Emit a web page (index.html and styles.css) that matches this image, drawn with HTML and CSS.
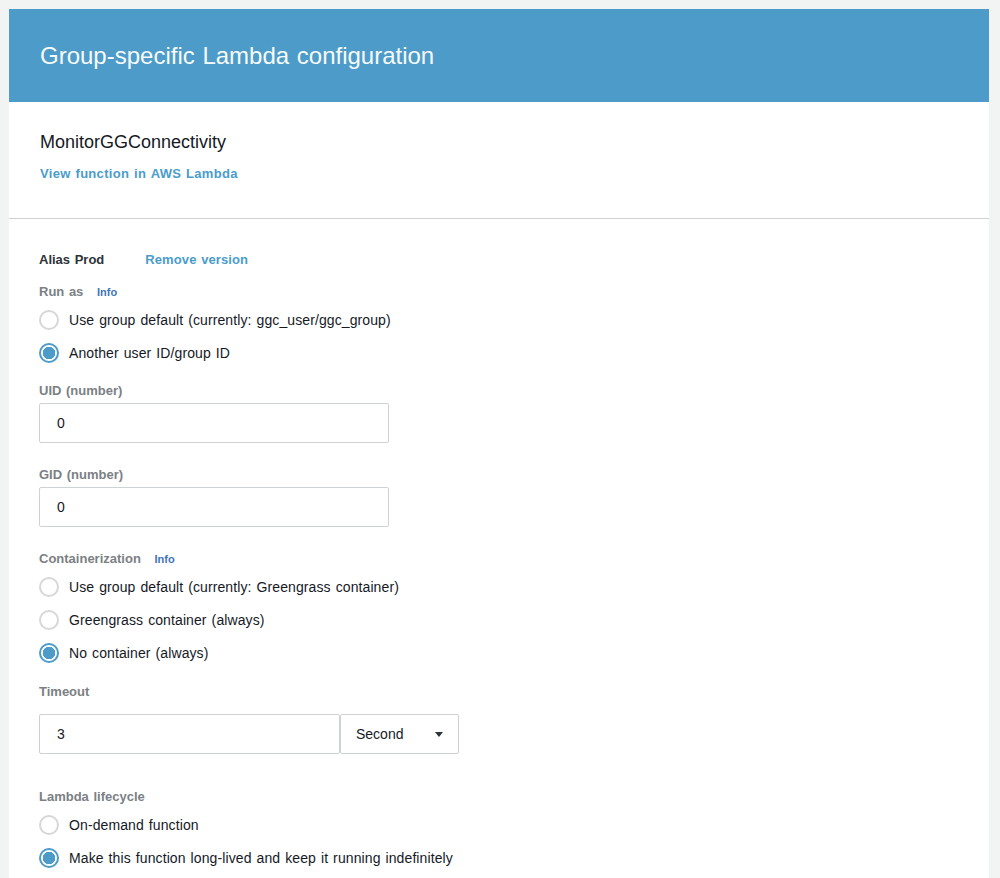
FILE: index.html
```html
<!DOCTYPE html>
<html>
<head>
<meta charset="utf-8">
<link rel="stylesheet" href="styles.css">
</head>
<body>
<div class="card">
  <div class="card-header">Group-specific Lambda configuration</div>
  <div class="section-top">
    <div class="fn-name">MonitorGGConnectivity</div>
    <a class="fn-link" href="#">View function in AWS Lambda</a>
  </div>
  <div class="section-main">
    <div class="alias-row">
      <span class="alias">Alias Prod</span>
      <a class="remove" href="#">Remove version</a>
    </div>

    <div class="label first-label">Run as <span class="info">Info</span></div>
    <div class="radios">
      <label class="radio"><span class="dot"></span>Use group default (currently: ggc_user/ggc_group)</label>
      <label class="radio"><span class="dot on"></span>Another user ID/group ID</label>
    </div>

    <div class="label field-label">UID (number)</div>
    <div class="input">0</div>

    <div class="label field-label gap">GID (number)</div>
    <div class="input">0</div>

    <div class="label gap">Containerization <span class="info">Info</span></div>
    <div class="radios">
      <label class="radio"><span class="dot"></span>Use group default (currently: Greengrass container)</label>
      <label class="radio"><span class="dot"></span>Greengrass container (always)</label>
      <label class="radio"><span class="dot on"></span>No container (always)</label>
    </div>

    <div class="label timeout-label">Timeout</div>
    <div class="timeout-row">
      <div class="input timeout-input">3</div>
      <div class="select">Second<span class="caret"></span></div>
    </div>

    <div class="label lifecycle-label">Lambda lifecycle</div>
    <div class="radios">
      <label class="radio"><span class="dot"></span>On-demand function</label>
      <label class="radio"><span class="dot on"></span>Make this function long-lived and keep it running indefinitely</label>
    </div>
  </div>
</div>
</body>
</html>
```

FILE: styles.css
```css
html, body {
  margin: 0;
  padding: 0;
  background: #f2f3f3;
  font-family: "Liberation Sans", Arial, sans-serif;
  color: #16191f;
}
body {
  padding: 9px 11px 0 9px;
  height: 869px;
  overflow: hidden;
}
.card {
  background: #fff;
  height: 900px;
}
.card-header {
  background: #4d9bc8;
  color: #f7fafc;
  height: 93px;
  box-sizing: border-box;
  padding: 0 31px;
  font-size: 24px;
  line-height: 93px;
  word-spacing: 1px;
}
.section-top {
  padding: 28px 31px 34px;
  border-bottom: 1px solid #cfd2d4;
}
.fn-name {
  font-size: 18px;
  line-height: 24px;
  color: #16191f;
}
.fn-link {
  display: block;
  margin-top: 10px;
  font-size: 13px;
  line-height: 20px;
  font-weight: bold;
  color: #4a9ccb;
  text-decoration: none;
  letter-spacing: 0.3px;
  word-spacing: 1px;
}
.section-main {
  padding: 31px 30px 0;
}
.alias-row {
  display: flex;
  align-items: center;
  gap: 41px;
  font-size: 13px;
  line-height: 20px;
  font-weight: bold;
  word-spacing: 1px;
}
.alias { color: #2d3338; }
.remove { color: #4a9ccb; text-decoration: none; letter-spacing: 0.1px; }
.label {
  font-size: 13px;
  line-height: 20px;
  font-weight: bold;
  color: #7b8084;
  word-spacing: 1px;
}
.info {
  font-size: 11px;
  color: #3f74b8;
  margin-left: 9px;
}
.first-label { margin-top: 12px; }
.radios {
  display: flex;
  flex-direction: column;
  gap: 13px;
  margin-top: 8px;
}
.radio {
  display: flex;
  align-items: center;
  gap: 10px;
  font-size: 14px;
  line-height: 20px;
  color: #16191f;
  letter-spacing: 0.1px;
  word-spacing: 1px;
}
.dot {
  width: 20px;
  height: 20px;
  box-sizing: border-box;
  border: 2px solid #d5d7d9;
  border-radius: 50%;
  background: #fff;
  flex: none;
}
.dot.on {
  border-color: #4d9bc8;
  background: radial-gradient(circle, #4d9bc8 0 6px, #fff 6.5px);
}
.field-label { margin-top: 18px; margin-bottom: 2px; }
.field-label.gap { margin-top: 22px; }
.label.gap { margin-top: 22px; }
.input {
  width: 350px;
  height: 40px;
  box-sizing: border-box;
  border: 1px solid #cfd2d4;
  border-radius: 2px;
  padding: 0 17px;
  font-size: 14px;
  line-height: 38px;
  color: #16191f;
}
.timeout-label { margin-top: 19px; margin-bottom: 12px; }
.timeout-row {
  display: flex;
}
.timeout-input {
  width: 301px;
}
.select {
  width: 119px;
  height: 40px;
  box-sizing: border-box;
  border: 1px solid #cfd2d4;
  border-radius: 2px;
  padding: 0 15px;
  font-size: 14px;
  line-height: 38px;
  color: #16191f;
  display: flex;
  align-items: center;
  justify-content: space-between;
}
.caret {
  width: 0;
  height: 0;
  border-left: 4.5px solid transparent;
  border-right: 4.5px solid transparent;
  border-top: 5px solid #2d3338;
}
.lifecycle-label { margin-top: 33px; }
```
